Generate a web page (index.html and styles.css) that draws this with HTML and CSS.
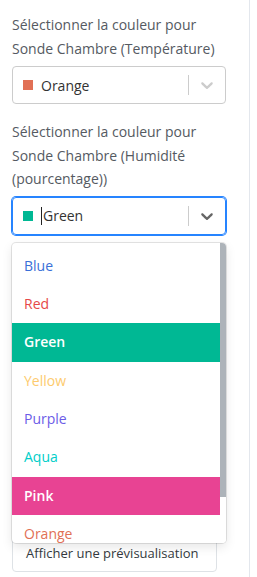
FILE: index.html
```html
<!DOCTYPE html>
<html lang="fr">

<head>
    <meta charset="UTF-8">
    <meta name="viewport" content="width=device-width, initial-scale=1.0">
    <title>Couleurs</title>
    <link rel="stylesheet" href="styles.css">
</head>

<body>
    <div class="panel">
        <div class="field">
            <label class="field-label">Sélectionner la couleur pour Sonde Chambre (Température)</label>
            <div class="select">
                <div class="select-value">
                    <span class="swatch swatch-orange"></span>
                    <span class="select-text">Orange</span>
                </div>
                <span class="select-sep"></span>
                <span class="select-arrow">
                    <svg width="20" height="20" viewBox="0 0 20 20"><path d="M4.516 7.548c0.436-0.446 1.043-0.481 1.576 0l3.908 3.747 3.908-3.747c0.533-0.481 1.141-0.446 1.574 0 0.436 0.445 0.408 1.197 0 1.615-0.406 0.418-4.695 4.502-4.695 4.502-0.217 0.223-0.502 0.335-0.787 0.335s-0.57-0.112-0.789-0.335c0 0-4.287-4.084-4.695-4.502s-0.436-1.17 0-1.615z" fill="currentColor"/></svg>
                </span>
            </div>
        </div>

        <div class="field">
            <label class="field-label">Sélectionner la couleur pour Sonde Chambre (Humidité (pourcentage))</label>
            <div class="select select-focused">
                <div class="select-value">
                    <span class="swatch swatch-green"></span>
                    <span class="caret"></span>
                    <span class="select-text">Green</span>
                </div>
                <span class="select-sep"></span>
                <span class="select-arrow">
                    <svg width="20" height="20" viewBox="0 0 20 20"><path d="M4.516 7.548c0.436-0.446 1.043-0.481 1.576 0l3.908 3.747 3.908-3.747c0.533-0.481 1.141-0.446 1.574 0 0.436 0.445 0.408 1.197 0 1.615-0.406 0.418-4.695 4.502-4.695 4.502-0.217 0.223-0.502 0.335-0.787 0.335s-0.57-0.112-0.789-0.335c0 0-4.287-4.084-4.695-4.502s-0.436-1.17 0-1.615z" fill="currentColor"/></svg>
                </span>
                <div class="menu">
                    <div class="menu-list">
                        <div class="option opt-blue">Blue</div>
                        <div class="option opt-red">Red</div>
                        <div class="option opt-green selected">Green</div>
                        <div class="option opt-yellow">Yellow</div>
                        <div class="option opt-purple">Purple</div>
                        <div class="option opt-aqua">Aqua</div>
                        <div class="option opt-pink selected">Pink</div>
                        <div class="option opt-orange">Orange</div>
                    </div>
                    <div class="scrollbar"><div class="thumb"></div></div>
                </div>
            </div>
        </div>

        <button class="btn-preview">Afficher une prévisualisation</button>
    </div>
</body>

</html>
```

FILE: styles.css
```css
html,
body {
    margin: 0;
    background: #fff;
}

body {
    font-family: "Open Sans", "Noto Sans", sans-serif;
    font-size: 14px;
    color: #333;
}

.panel {
    width: 250px;
    height: 577px;
    box-sizing: border-box;
    border-right: 1px solid #e3e7ed;
    padding: 13px 0 0 12px;
    overflow: hidden;
}

.field {
    width: 214px;
    margin-bottom: 16px;
}

.field-label {
    display: block;
    color: #555a62;
    line-height: 23.5px;
    margin-bottom: 6px;
}

.select {
    position: relative;
    height: 38px;
    box-sizing: border-box;
    border: 1px solid #ccc;
    border-radius: 4px;
    display: flex;
    align-items: center;
}

.select-focused {
    border-color: #2684ff;
    box-shadow: 0 0 0 1px #2684ff;
}

.select-value {
    flex: 1;
    display: flex;
    align-items: center;
    padding-left: 10px;
}

.swatch {
    width: 10px;
    height: 10px;
    margin-right: 8px;
}

.swatch-orange {
    background: #e17055;
}

.swatch-green {
    background: #00b894;
}

.caret {
    width: 1px;
    height: 18px;
    background: #222;
    margin-right: 1px;
}

.select-sep {
    width: 1px;
    height: 20px;
    background: #ccc;
}

.select-arrow {
    width: 36px;
    display: flex;
    justify-content: center;
    color: #ccc;
}

.select-focused .select-arrow {
    color: #666;
}

.menu {
    position: absolute;
    top: 45px;
    left: -1px;
    right: -1px;
    height: 300px;
    background: #fff;
    border-radius: 4px;
    box-shadow: 0 0 0 1px rgba(0, 0, 0, 0.1), 0 4px 11px rgba(0, 0, 0, 0.1);
    overflow: hidden;
    display: flex;
    z-index: 2;
}

.menu-list {
    flex: 1;
    padding-top: 4px;
}

.option {
    height: 38.4px;
    line-height: 38.4px;
    padding: 0 12px;
}

.option.selected {
    color: #fff;
    font-weight: 600;
}

.opt-blue { color: #3a6fd8; }
.opt-red { color: #e64848; }
.opt-green { background: #00b894; }
.opt-yellow { color: #fdcb6e; }
.opt-purple { color: #6c5ce7; }
.opt-aqua { color: #00cec9; }
.opt-pink { background: #e84393; }
.opt-orange { color: #e17055; }

.scrollbar {
    width: 6px;
    background: #fff;
}

.thumb {
    height: 254px;
    background: #adb3b9;
}

.btn-preview {
    display: block;
    margin-top: 299px;
    width: 205px;
    height: 38px;
    background: #fff;
    border: 1px solid #dee2e6;
    border-radius: 4px;
    font-family: inherit;
    font-size: 13px;
    color: #343a40;
    text-align: left;
    white-space: nowrap;
    padding: 0 0 0 13px;
}
```
